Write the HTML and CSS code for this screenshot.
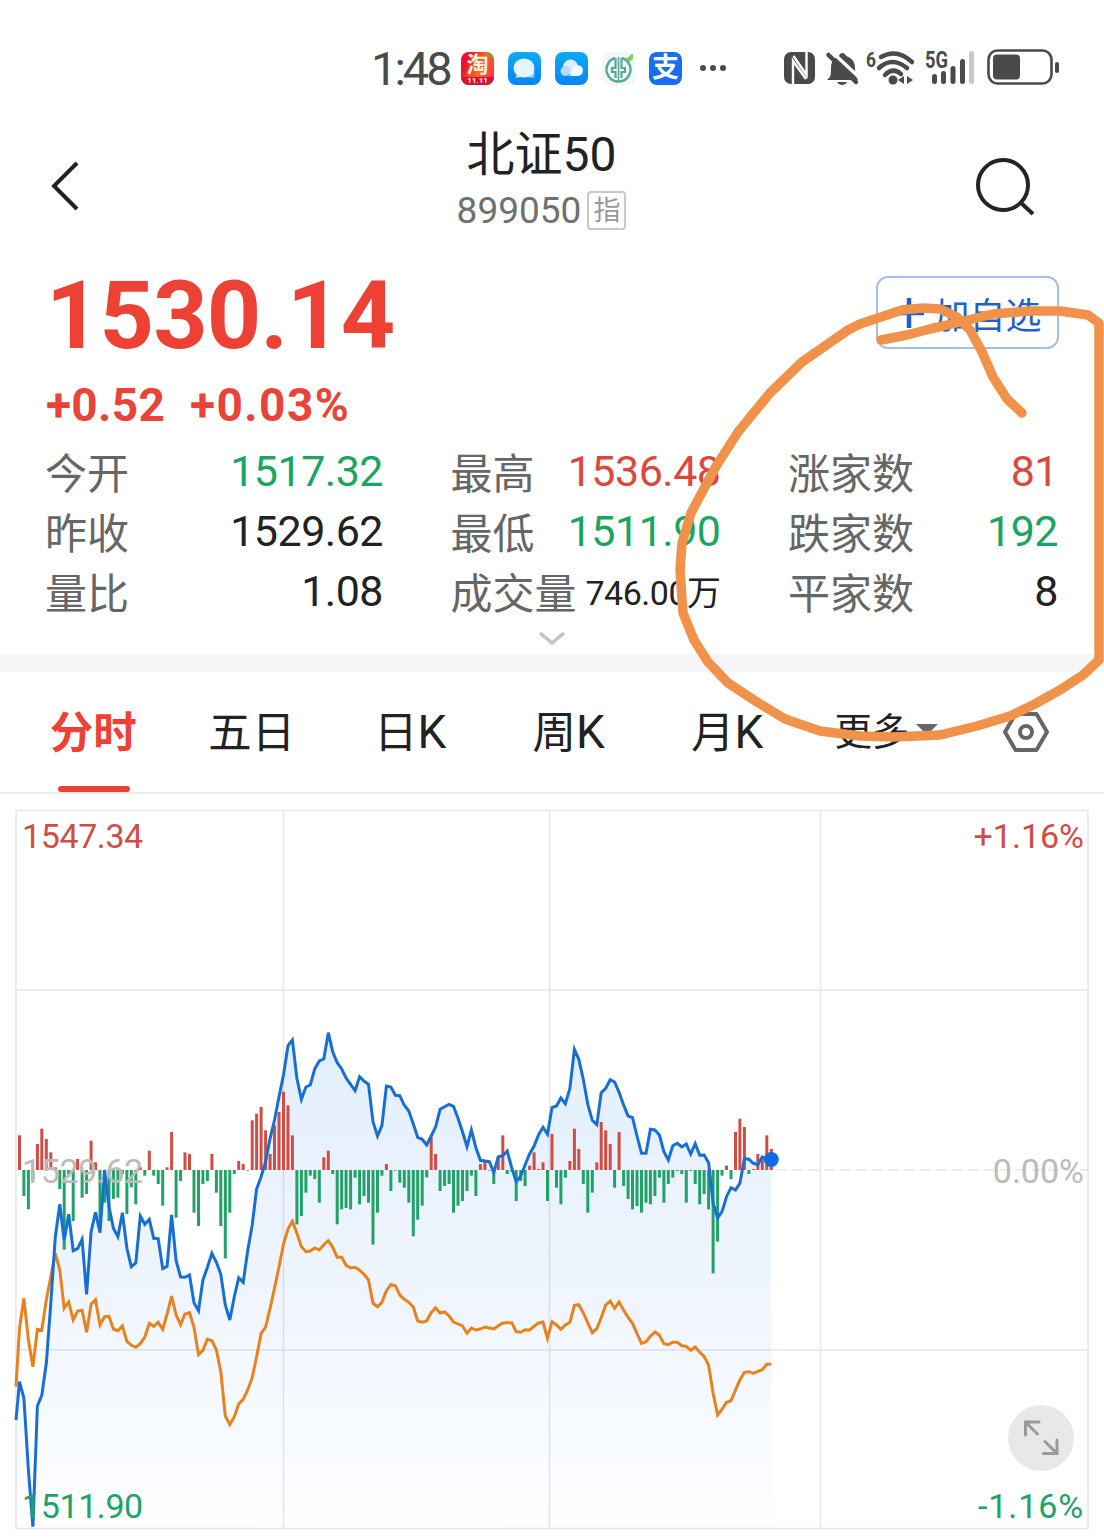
FILE: index.html
```html
<!DOCTYPE html>
<html lang="zh-CN">
<head>
    <meta charset="UTF-8">
    <meta name="viewport" content="width=device-width, initial-scale=1.0">
    <title>北证50</title>
    <link rel="stylesheet" href="styles.css">
</head>
<body>
    <div class="status-bar">
        <span class="time">1:48</span>
        <div class="app-icons">
            <div class="app taobao"><span>淘</span><b>11.11</b><i></i></div>
            <div class="app blue">
                <svg viewBox="0 0 33 33"><path d="M9 21l-1.500 5 7-1zM21 24l5 2-1-7z" fill="#a9d6fb"/><circle cx="22" cy="21" r="4.500" fill="#a9d6fb"/><ellipse cx="16" cy="16" rx="10.500" ry="9.500" fill="#e6f4ff"/></svg>
            </div>
            <div class="app blue">
                <svg viewBox="0 0 33 33"><circle cx="15.500" cy="15" r="7.500" fill="#dceefe"/><circle cx="22.500" cy="18.500" r="5.500" fill="#f4faff"/><path d="M12 24c6 0 5-8 11-10v10z" fill="#f4faff"/><circle cx="10.500" cy="19" r="5" fill="#b9dafb"/></svg>
            </div>
            <div class="app bank">
                <svg viewBox="0 0 33 33" fill="none" stroke="#56a899" stroke-width="2.400"><path d="M20 6A12 12 0 1 1 13 6"/><path d="M16.500 5v23" stroke-width="1.600"/><path d="M13.500 6v10H10v4h3.500v6M19.500 6v10H23v4h-3.500v6" stroke-width="2.200"/><path d="M24 7l7-6v6l-4 3z" fill="#7fcf5c" stroke="none"/></svg>
            </div>
            <div class="app alipay">支</div>
        </div>
        <svg class="dots" viewBox="0 0 28 8" fill="#4a4a4a"><circle cx="4" cy="4" r="3"/><circle cx="14" cy="4" r="3"/><circle cx="24" cy="4" r="3"/></svg>
        <svg class="system-icons" viewBox="0 0 280 40" fill="#4a4a4a">
            <!-- nfc -->
            <rect x="4" y="4" width="31" height="32" rx="7"/>
            <path d="M13 36V13L26 31" fill="none" stroke="#fff" stroke-width="2.400"/>
            <path d="M26.500 4V27L13.500 8" fill="none" stroke="#fff" stroke-width="2.400"/>
            <!-- muted bell -->
            <path d="M47 32c4-3 4-6 4-12 0-7 4-11 8-12 1-4 6-4 7 0 6 2 9 6 9 12 0 6 1 9 3 12zM57 34h10c-2 4-8 4-10 0z"/>
            <path d="M51 3l31 29" stroke="#fff" stroke-width="3.500"/>
            <path d="M48.500 7L76 34" stroke="#4a4a4a" stroke-width="4.500" stroke-linecap="round"/>
            <!-- wifi -->
            <text x="86" y="19" class="wifi-gen" textLength="10" lengthAdjust="spacingAndGlyphs">6</text>
            <g fill="none" stroke="#4a4a4a" stroke-width="4.500" stroke-linecap="round">
                <path d="M101 9Q117 0 132 14"/>
                <path d="M99 20Q112 8 127 20"/>
                <path d="M105 27Q113 19 121 26"/>
            </g>
            <circle cx="113" cy="32" r="4.500"/>
            <path d="M118 32l6-4v8zM133 32l-6-4v8z"/>
            <!-- mobile signal -->
            <text x="145" y="20" class="net" textLength="23" lengthAdjust="spacingAndGlyphs">5G</text>
            <rect x="152" y="26" width="5" height="10" rx="2.500"/>
            <rect x="161" y="23" width="5" height="13" rx="2.500"/>
            <rect x="170.500" y="18" width="5" height="18" rx="2.500"/>
            <rect x="180" y="11" width="5" height="25" rx="2.500"/>
            <rect x="189" y="3" width="5" height="33" rx="2.500" fill="#c9c9c9"/>
            <!-- battery -->
            <rect x="208.500" y="2.500" width="63" height="33" rx="9" fill="none" stroke="#4a4a4a" stroke-width="2.600"/>
            <rect x="213" y="6.500" width="27" height="25" rx="4"/>
            <rect x="275" y="14" width="4" height="11" rx="2"/>
        </svg>
    </div>

    <div class="header">
        <svg class="back" viewBox="0 0 30 50"><path d="M27 2L4 25l23 23" fill="none" stroke="#222" stroke-width="4"/></svg>
        <div class="title">
            <h1>北证50</h1>
            <p>899050<span class="tag">指</span></p>
        </div>
        <svg class="search" viewBox="0 0 62 62" fill="none" stroke="#20242c" stroke-width="4"><circle cx="29" cy="29" r="25"/><path d="M46 46l13 12"/></svg>
    </div>

    <div class="summary">
        <div class="price-row">
            <span class="price">1530.14</span>
            <button class="add-btn"><svg viewBox="0 0 32 32"><path d="M16 1v30M1 16h30" stroke="#1f5fd0" stroke-width="4.500"/></svg><span>加自选</span></button>
        </div>
        <div class="change"><span>+0.52</span><span class="percent">+0.03%</span></div>
        <div class="stats">
            <div class="stat"><label>今开</label><span class="down">1517.32</span></div>
            <div class="stat"><label>最高</label><span class="up">1536.48</span></div>
            <div class="stat"><label>涨家数</label><span class="up">81</span></div>
            <div class="stat"><label>昨收</label><span>1529.62</span></div>
            <div class="stat"><label>最低</label><span class="down">1511.90</span></div>
            <div class="stat"><label>跌家数</label><span class="down">192</span></div>
            <div class="stat"><label>量比</label><span>1.08</span></div>
            <div class="stat"><label>成交量</label><span class="small">746.00万</span></div>
            <div class="stat"><label>平家数</label><span>8</span></div>
        </div>
        <svg class="expand" viewBox="0 0 28 14"><path d="M2 2l12 10L26 2" fill="none" stroke="#c4c4c6" stroke-width="3.500"/></svg>
    </div>

    <div class="tabs">
        <div class="tab active">分时</div>
        <div class="tab">五日</div>
        <div class="tab">日<span>K</span></div>
        <div class="tab">周<span>K</span></div>
        <div class="tab">月<span>K</span></div>
        <div class="tab more">更多<i></i></div>
        <svg class="settings" viewBox="0 0 46 40" fill="none" stroke="#666" stroke-width="4"><path d="M12.500 2h21L44 20 33.500 38h-21L2 20z" stroke-linejoin="round"/><circle cx="23" cy="20" r="6"/></svg>
    </div>

    <div class="chart">
        <svg id="chart" viewBox="0 0 1104 729">
            <defs>
                <linearGradient id="fill" x1="0" y1="220" x2="0" y2="719" gradientUnits="userSpaceOnUse">
                    <stop offset="0" stop-color="#e2eefd"/>
                    <stop offset=".5" stop-color="#eff5fe"/>
                    <stop offset="1" stop-color="#fdfeff"/>
                </linearGradient>
            </defs>
            <path id="area" fill="url(#fill)"/>
            <g class="grid">
                <path d="M16 .5H1088V718.500H16zM283.500 0V718M549.500 0V718M820.500 0V718M16 180H1088M16 540H1088"/>
                <path d="M776 360H1088" stroke-dasharray="11 5"/>
            </g>
            <g id="bars"></g>
            <path id="avg" class="line avg"/>
            <path id="now" class="line now"/>
            <circle cx="771.300" cy="349.500" r="7.500" fill="#0f6be0"/>
            <text x="22" y="38" class="up">1547.34</text>
            <text x="1084" y="38" class="up end">+1.16%</text>
            <text x="22" y="373" class="flat">1529.62</text>
            <text x="1084" y="373" class="flat end">0.00%</text>
            <text x="22" y="708" class="down">1511.90</text>
            <text x="1084" y="708" class="down end wide">-1.16%</text>
        </svg>
        <div class="fullscreen">
            <svg viewBox="0 0 36 36" fill="none" stroke="#9a9a9a" stroke-width="3" stroke-linecap="round"><path d="M2.500 15V2H16M2.500 2l12 12M34 20v13.500H20.500M34 33.500L22 21.500"/></svg>
        </div>
    </div>

    <svg class="marker" viewBox="0 0 1104 1539">
        <path d="M1022 413L1007 399 993 377 982 352 970 330 957 317 940 309 923 308 902 310 860 324 848 330 802 362 770 393 738 432 715 468 691 513 682 543 680 570 683 613 694 640 708 662 728 683 757 702 785 719 820 731 860 736 893 737 940 735 977 726 1010 716 1033 705 1060 690 1083 675 1099 660V323L1088 315 1060 311 1030 311 993 314 960 322 930 329 907 335 881 340"/>
    </svg>

    <script>
        // One entry per minute, 3 units = 1px
        const volume = [
            104,-78,-118,-30,78,124,93,53,8,-57,-239,-20,-153,33,-83,-72,88,23,-170,-98,
            -153,-87,-83,-12,-132,-52,-103,8,-17,58,-17,-42,-107,8,114,-143,-33,53,48,-128,
            -168,-42,-33,48,-68,-168,-265,-128,-12,27,18,-2,149,169,189,119,48,134,174,235,
            194,104,-163,-138,-68,-17,-27,-98,38,58,-12,-163,-118,-114,-118,-23,-103,-78,-98,-224,
            -128,-17,18,-63,-2,-38,-53,-98,-199,-149,-107,-22,99,48,-63,-48,-42,-128,-107,-93,
            -63,-17,-78,18,25,-2,-42,40,104,-12,-4,-93,-33,-48,13,53,3,23,-93,108,
            -53,-103,-23,27,124,63,-42,-128,-68,23,144,119,78,-53,114,-48,-87,-118,-108,-128,
            -98,-103,-78,-23,-98,-42,-23,-3,-12,-98,-3,-42,-103,-72,-118,-310,-215,-17,13,-27,
            114,154,129,-12,3,48,40,104,63
        ];
        const price = [
            1230,1115,1165,1380,1550,1188,1156,1060,880,680,583,690,613,722,716,688,853,665,607,668,
            480,590,655,680,608,715,770,759,618,643,628,685,686,776,769,615,752,801,802,795,
            878,902,810,772,730,757,793,885,930,860,803,817,722,645,537,500,455,385,330,260,
            195,107,90,205,268,231,225,176,153,147,68,125,158,177,204,223,242,200,213,223,
            335,378,347,228,231,256,257,286,303,342,382,388,405,378,351,298,290,283,289,325,
            365,410,360,413,451,453,455,487,440,437,423,473,515,498,465,432,408,374,352,373,
            293,288,264,281,235,118,148,208,283,331,344,248,235,209,216,247,285,318,323,378,
            430,430,358,360,375,425,450,407,400,411,402,432,401,436,435,458,580,624,605,560,
            533,540,520,446,448,460,464,441,448,448
        ];
        const average = [
            1130,955,865,990,1070,958,961,870,800,730,780,895,876,930,903,901,967,883,869,945,
            920,919,957,962,948,994,1006,1012,1001,981,940,949,937,958,912,858,915,944,912,908,
            952,1034,1021,988,992,1020,1085,1218,1244,1220,1182,1168,1140,1103,1040,970,951,895,835,770,
            703,657,634,670,710,725,723,714,720,704,692,712,742,742,766,774,772,781,793,810,
            880,890,877,842,824,827,855,868,877,891,933,937,933,908,893,909,906,918,936,942,
            948,970,954,960,957,951,954,957,947,939,938,938,965,967,959,960,949,939,936,985,
            935,945,958,945,937,886,884,909,939,968,956,923,885,873,895,876,901,922,940,971,
            1000,995,979,966,976,1001,1004,997,997,1007,1009,1021,1011,1027,1039,1066,1150,1215,1198,1177,
            1172,1140,1110,1087,1085,1090,1084,1079,1063,1062
        ];

        const step = 4.475;
        const getX = i => (15 + i * step).toFixed(1);
        const toPath = data => 'M' + data.map((v, i) => `${i ? getX(i) : 16} ${(200 + v / 3).toFixed(1)}`).join('L');

        document.getElementById('now').setAttribute('d', toPath(price));
        document.getElementById('avg').setAttribute('d', toPath(average));
        document.getElementById('area').setAttribute('d', toPath(price) + 'V718H16Z');
        document.getElementById('bars').innerHTML = volume.map((v, i) => {
            const h = Math.abs(v) / 3;
            const y = v > 0 ? 360 - h : 360;
            return `<rect x="${getX(i + 1) - 1.5}" y="${y}" width="3" height="${h}" class="${v > 0 ? 'up' : 'down'}"/>`;
        }).join('');
    </script>
</body>
</html>
```
FILE: styles.css
```css
* {
    box-sizing: border-box;
}

body {
    font-family: Roboto, 'Noto Sans CJK SC', sans-serif;
    margin: 0;
    width: 1104px;
    height: 1539px;
    overflow: hidden;
    position: relative;
    background: #fff;
    color: #222;
}

svg {
    display: block;
}

.up {
    color: #dc483d;
    fill: #d14d43;
}

.down {
    color: #1aa561;
    fill: #22a266;
}

/* Status bar */
.status-bar {
    display: flex;
    align-items: center;
    height: 110px;
    padding: 26px 44px 0 371px;
}

.time {
    width: 90px;
    font-size: 47px;
    letter-spacing: -3px;
    color: #4a4a4a;
}

.app-icons {
    display: flex;
    gap: 14px;
}

.app {
    width: 33px;
    height: 33px;
    border-radius: 8px;
    overflow: hidden;
    position: relative;
}

.blue {
    background: linear-gradient(#0eaaf3, #0785f5);
}

.bank {
    background: #f5f6f6;
}

.alipay {
    background: #1a6cf0;
    color: #fff;
    font-size: 27px;
    font-weight: bold;
    line-height: 32px;
    text-align: center;
}

.taobao {
    background: linear-gradient(115deg, #e8132c 20%, #ff6a21 55%, #e8285a);
    color: #fff3dc;
    text-align: center;
}

.taobao span {
    display: block;
    font-size: 22px;
    font-weight: bold;
    line-height: 25px;
}

.taobao b {
    display: block;
    background: #d90f35;
    font-size: 8px;
    line-height: 8px;
}

.taobao i {
    position: absolute;
    top: 0;
    right: 0;
    width: 7px;
    height: 5px;
    border-radius: 0 0 0 5px;
    background: #55b82c;
}

.dots {
    width: 28px;
    height: 8px;
    margin-left: 17px;
}

.system-icons {
    width: 280px;
    height: 40px;
    margin-left: 53px;
    flex-shrink: 0;
    overflow: visible;
}

.wifi-gen {
    font-size: 21px;
    font-weight: bold;
}

.net {
    font-size: 23px;
    font-weight: bold;
}

/* Header */
.header {
    display: flex;
    justify-content: space-between;
    height: 146px;
    padding: 0 68px 0 50px;
}

.back {
    width: 30px;
    height: 50px;
    margin-top: 51px;
}

.title {
    text-align: center;
    margin-left: 29px;
}

.title h1 {
    margin: 11px 0 0;
    font-size: 48px;
    font-weight: 400;
    line-height: 68px;
}

.title p {
    display: flex;
    align-items: center;
    justify-content: center;
    margin: 0;
    height: 42px;
    font-size: 37px;
    color: #707070;
}

.tag {
    width: 39px;
    height: 39px;
    margin-left: 6px;
    border: 2px solid #c9c9c9;
    border-radius: 4px;
    font-size: 27px;
    line-height: 37px;
    color: #999;
}

.search {
    width: 62px;
    height: 62px;
    margin-top: 46px;
}

/* Price summary */
.summary {
    height: 398px;
    padding: 5px 46px 0 46px;
}

.price-row {
    display: flex;
    justify-content: space-between;
    height: 113px;
}

.price {
    font-size: 95px;
    font-weight: bold;
    line-height: 110px;
    letter-spacing: -0.9px;
    color: #ee4135;
}

.add-btn {
    display: flex;
    align-items: center;
    justify-content: center;
    width: 183px;
    height: 73px;
    margin-top: 15px;
    margin-right: -1px;
    padding: 0;
    background: #fff;
    border: 2px solid #a5bfe8;
    border-radius: 12px;
    font-family: inherit;
    font-size: 36px;
    color: #1f5fd0;
}

.add-btn span {
    padding-top: 1px;
}

.add-btn svg {
    width: 32px;
    height: 32px;
    margin-right: 8px;
}

.change {
    display: flex;
    gap: 25px;
    height: 66px;
    font-size: 46px;
    font-weight: bold;
    line-height: 62px;
    letter-spacing: 0.3px;
    color: #e8443a;
}

.change .percent {
    letter-spacing: 1.4px;
}

.stats {
    display: grid;
    grid-template-columns: 337px 269px 269px;
    grid-auto-rows: 60px;
    column-gap: 68.5px;
}

.stat {
    display: flex;
    align-items: center;
    justify-content: space-between;
    font-size: 43px;
    letter-spacing: -0.5px;
    white-space: nowrap;
}

.stat span {
    padding-top: 2px;
}

.stat label {
    margin-left: -1px;
    font-size: 42px;
    letter-spacing: 0;
    color: #666;
}

.stat .small {
    padding-top: 0;
    font-size: 34px;
}

.expand {
    width: 28px;
    height: 14px;
    margin: 11px auto 0 492px;
}

/* Period tabs */
.tabs {
    display: flex;
    align-items: center;
    height: 140px;
    padding-left: 14px;
    border-top: 18px solid #f6f6f9;
    border-bottom: 2px solid #ececee;
}

.tab {
    position: relative;
    width: 158.500px;
    height: 120px;
    font-size: 43.5px;
    line-height: 123px;
    text-align: center;
}

.tab span {
    font-size: 46px;
    line-height: 1;
}

.tab.active {
    font-weight: bold;
    color: #ee4135;
}

.tab.active::after {
    content: '';
    position: absolute;
    left: 44px;
    bottom: 0;
    width: 72px;
    height: 6px;
    border-radius: 3px;
    background: #ee4135;
}

.tab.more {
    display: flex;
    align-items: center;
    width: 196px;
    padding-left: 28px;
    font-size: 37.500px;
}

.more i {
    margin-left: 6px;
    margin-top: -6px;
    border: 11px solid transparent;
    border-top-color: #666;
    border-bottom: 0;
}

.settings {
    width: 46px;
    height: 40px;
}

/* Chart */
.chart {
    position: relative;
    padding-top: 16px;
}

#chart {
    width: 1104px;
    height: 729px;
}

#chart text {
    font-size: 34px;
    letter-spacing: -0.4px;
}

#chart text.flat {
    fill: #bbb;
}

#chart .end {
    text-anchor: end;
    letter-spacing: 0;
}

#chart .wide {
    letter-spacing: 0.9px;
}

.grid {
    fill: none;
    stroke: #505a6e;
    stroke-opacity: .15;
    stroke-width: 1.5;
}

.line {
    fill: none;
    stroke-width: 3;
}

.avg {
    stroke: #e8821e;
}

.now {
    stroke: #186fd3;
}

.fullscreen {
    position: absolute;
    right: 30px;
    bottom: 68px;
    width: 66px;
    height: 66px;
    padding: 15px;
    border-radius: 50%;
    background: #e8e8e8;
}

/* Hand-drawn highlight above the page */
.marker {
    position: absolute;
    top: 0;
    left: 0;
    width: 1104px;
    height: 1539px;
    pointer-events: none;
}

.marker path {
    fill: none;
    stroke: #f0924a;
    stroke-width: 9.5;
    stroke-linecap: round;
    stroke-linejoin: round;
}
```
